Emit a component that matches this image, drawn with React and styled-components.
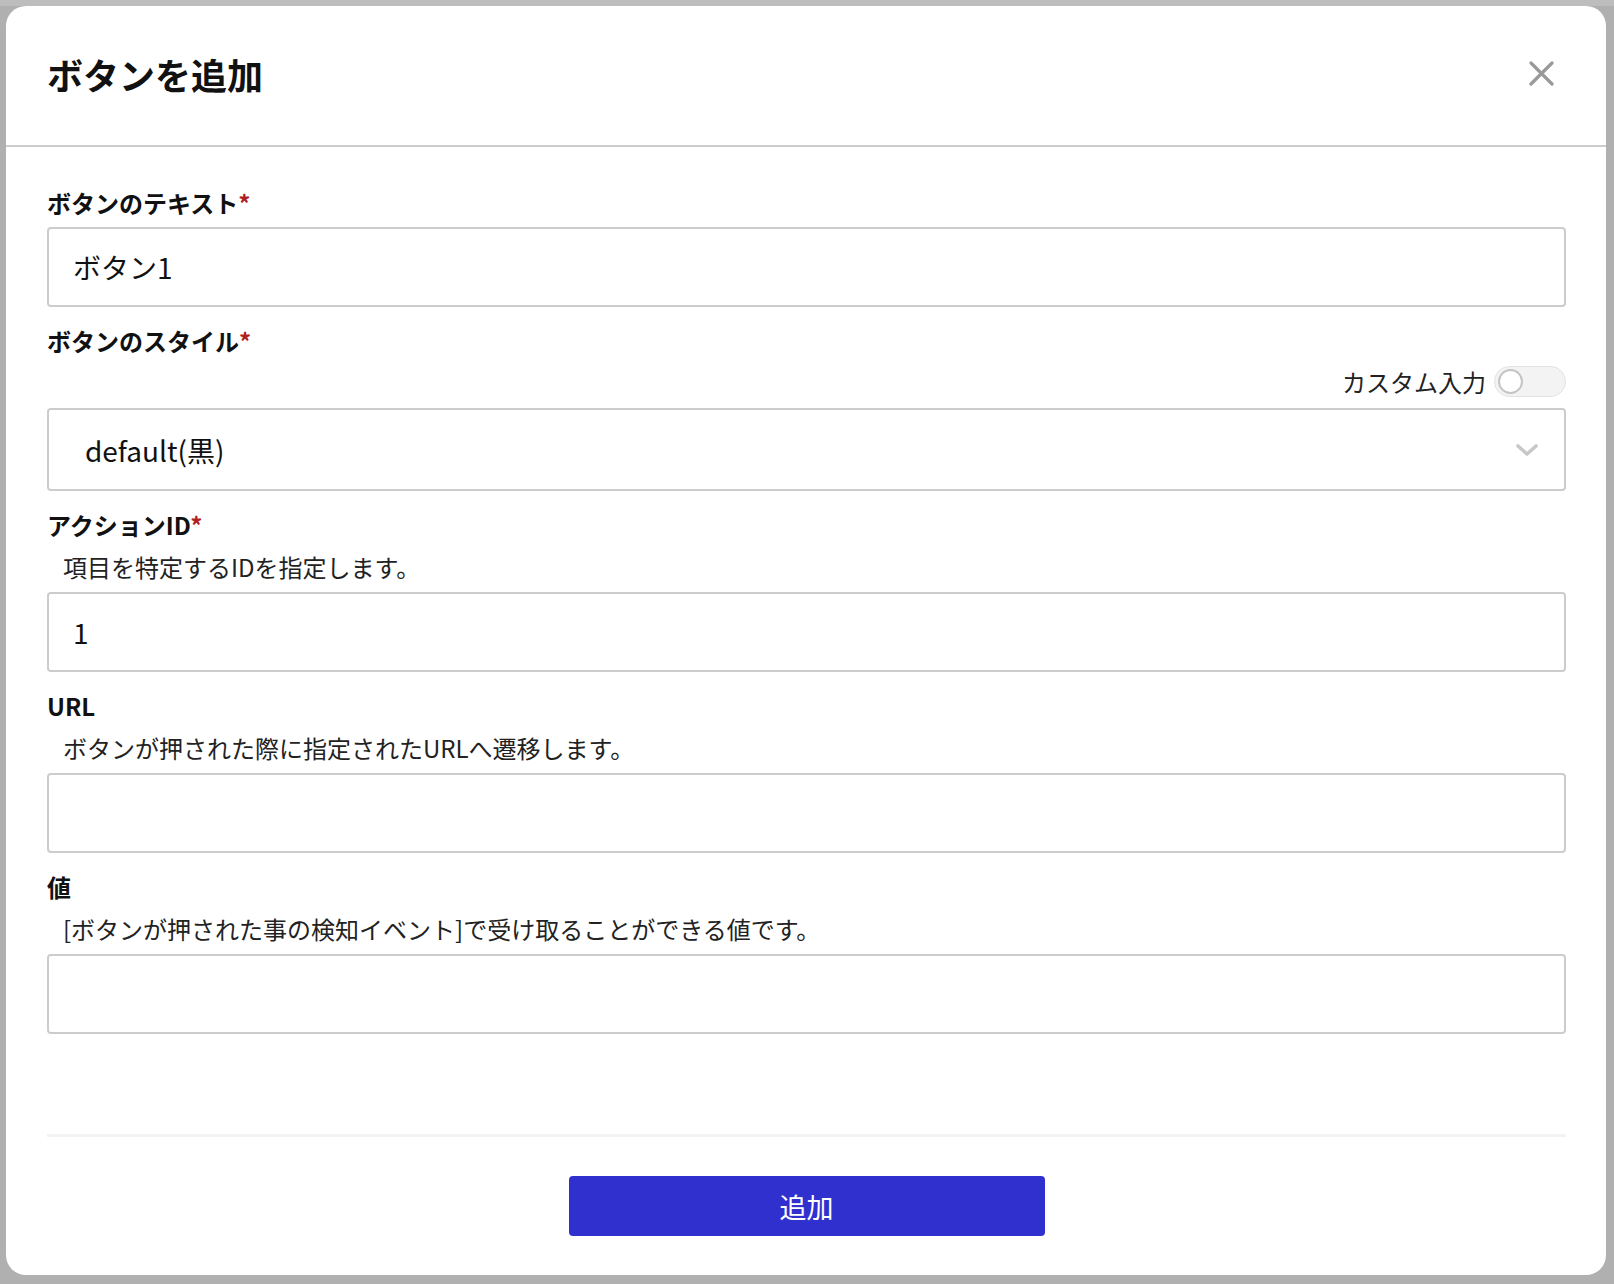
import React, { useState } from 'react'
import styled, { createGlobalStyle } from 'styled-components'

const GlobalStyle = createGlobalStyle`
  html, body {
    margin: 0;
    padding: 0;
  }
  body {
    background-color: #b0b0b0;
    font-family: "Noto Sans CJK JP", "Noto Sans", sans-serif;
    color: #111111;
  }
  * {
    box-sizing: border-box;
  }
`

const Backdrop = styled.div`
  width: 1614px;
  height: 1284px;
  padding: 6px 8px 9px 6px;
  background: linear-gradient(to bottom, #bdbdbd 0px, #bdbdbd 6px, #b0b0b0 6px);
`

const Modal = styled.div`
  width: 1600px;
  height: 1269px;
  background-color: #ffffff;
  border-radius: 20px;
  display: flex;
  flex-direction: column;
  overflow: hidden;
`

const Header = styled.div`
  height: 141px;
  flex-shrink: 0;
  display: flex;
  align-items: center;
  justify-content: space-between;
  padding: 0 50px 4px 41px;
  border-bottom: 2px solid #cccccc;
`

const Title = styled.h2`
  margin: 0;
  font-size: 36px;
  font-weight: 700;
  line-height: 1;
`

const CloseButton = styled.button`
  width: 29px;
  height: 29px;
  padding: 2px;
  border: none;
  background: none;
  cursor: pointer;
  display: flex;
  align-items: center;
  justify-content: center;
`

const Body = styled.div`
  flex: 1;
  padding: 39px 40px 0 41px;
  display: flex;
  flex-direction: column;
`

const Field = styled.div`
  display: flex;
  flex-direction: column;
  margin-bottom: 17px;
`

const Label = styled.label`
  font-size: 24px;
  font-weight: 700;
  line-height: 33px;
  color: #111111;
`

const Required = styled.span`
  color: #b02020;
`

const Hint = styled.p`
  margin: 9px 0 0 16px;
  font-size: 24px;
  line-height: 33px;
  color: #222222;
`

const Input = styled.input`
  margin-top: ${p => (p.$tight ? '9px' : '8px')};
  width: 100%;
  height: 80px;
  border: 2px solid #cccccc;
  border-radius: 4px;
  padding: 0 24px;
  font-family: "Noto Sans CJK JP", "Noto Sans", sans-serif;
  font-size: 28px;
  color: #111111;
  background: #ffffff;
  outline: none;
`

const ToggleRow = styled.div`
  margin-top: 9px;
  display: flex;
  justify-content: flex-end;
  align-items: center;
  gap: 8px;
`

const ToggleText = styled.span`
  font-size: 24px;
  line-height: 31px;
  color: #222222;
`

const Toggle = styled.button`
  width: 72px;
  height: 31px;
  border-radius: 16px;
  border: 1px solid #e2e2e2;
  background-color: ${p => (p.$on ? '#3030d0' : '#f3f3f3')};
  padding: 0 3px;
  display: flex;
  align-items: center;
  justify-content: ${p => (p.$on ? 'flex-end' : 'flex-start')};
  cursor: pointer;
`

const Knob = styled.span`
  width: 25px;
  height: 25px;
  border-radius: 50%;
  background: #ffffff;
  border: 2px solid #c4c4c4;
`

const SelectBox = styled.div`
  margin-top: 11px;
  height: 83px;
  border: 2px solid #cccccc;
  border-radius: 4px;
  display: flex;
  align-items: center;
  justify-content: space-between;
  padding: 0 25px 0 36px;
  font-size: 28px;
  color: #111111;
`

const Footer = styled.div`
  margin: 0 40px 0 41px;
  border-top: 3px solid #f3f3f3;
  padding: 39px 0;
  display: flex;
  justify-content: center;
`

const SubmitButton = styled.button`
  width: 476px;
  height: 60px;
  border: none;
  border-radius: 4px;
  background-color: #3030cf;
  color: #ffffff;
  font-family: "Noto Sans CJK JP", "Noto Sans", sans-serif;
  font-size: 27px;
  cursor: pointer;
`

function App() {
  const [custom, setCustom] = useState(false)
  const [form, setForm] = useState({ text: 'ボタン1', actionId: '1', url: '', value: '' })

  const onChange = (event) => {
    const { name, value } = event.target
    setForm({ ...form, [name]: value })
  }

  return (
    <>
      <GlobalStyle />
      <Backdrop>
        <Modal>
          <Header>
            <Title>ボタンを追加</Title>
            <CloseButton aria-label="close">
              <svg width="25" height="25" viewBox="0 0 25 25">
                <path d="M2 2L23 23M23 2L2 23" stroke="#999999" strokeWidth="3.2" strokeLinecap="round" />
              </svg>
            </CloseButton>
          </Header>
          <Body>
            <Field>
              <Label>ボタンのテキスト<Required>*</Required></Label>
              <Input name="text" value={form.text} onChange={onChange} />
            </Field>
            <Field>
              <Label>ボタンのスタイル<Required>*</Required></Label>
              <ToggleRow>
                <ToggleText>カスタム入力</ToggleText>
                <Toggle $on={custom} onClick={() => setCustom(!custom)}>
                  <Knob />
                </Toggle>
              </ToggleRow>
              <SelectBox>
                <span>default(黒)</span>
                <svg width="24" height="14" viewBox="0 0 24 14">
                  <path d="M3 3L12 11L21 3" fill="none" stroke="#c8c8c8" strokeWidth="3.6" strokeLinecap="round" strokeLinejoin="round" />
                </svg>
              </SelectBox>
            </Field>
            <Field>
              <Label>アクションID<Required>*</Required></Label>
              <Hint>項目を特定するIDを指定します。</Hint>
              <Input $tight name="actionId" value={form.actionId} onChange={onChange} />
            </Field>
            <Field>
              <Label>URL</Label>
              <Hint>ボタンが押された際に指定されたURLへ遷移します。</Hint>
              <Input $tight name="url" value={form.url} onChange={onChange} />
            </Field>
            <Field>
              <Label>値</Label>
              <Hint>[ボタンが押された事の検知イベント]で受け取ることができる値です。</Hint>
              <Input $tight name="value" value={form.value} onChange={onChange} />
            </Field>
          </Body>
          <Footer>
            <SubmitButton>追加</SubmitButton>
          </Footer>
        </Modal>
      </Backdrop>
    </>
  )
}

export default App
